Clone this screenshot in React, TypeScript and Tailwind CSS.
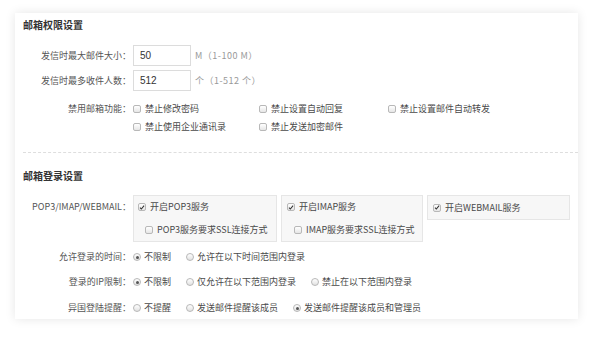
import React from 'react';

const font = { fontFamily: '"Noto Sans CJK SC", "Liberation Sans", sans-serif' };

const Check = ({ checked = false }: { checked?: boolean }) => (
  <span className="relative inline-flex h-[8px] w-[8px] shrink-0 items-center justify-center rounded-[2px] border border-[#b8b8b8] bg-gradient-to-b from-white to-[#e6e6e6]">
    {checked && (
      <svg viewBox="0 0 8 8" className="h-[7px] w-[7px]">
        <path d="M1.3 4.2 L3.1 6 L6.8 1.6" fill="none" stroke="#333" strokeWidth="1.4" />
      </svg>
    )}
  </span>
);

const Radio = ({ checked = false }: { checked?: boolean }) => (
  <span className="inline-flex h-[8px] w-[8px] shrink-0 items-center justify-center rounded-full border border-[#b8b8b8] bg-gradient-to-b from-white to-[#e2e2e2]">
    {checked && <span className="h-[3px] w-[3px] rounded-full bg-[#555]" />}
  </span>
);

const Label = ({ children }: { children: React.ReactNode }) => (
  <div className="w-[116px] shrink-0 text-right text-[#555]">{children}</div>
);

const CheckItem = ({ text, checked, w }: { text: string; checked?: boolean; w?: string }) => (
  <label className={`flex items-center gap-[4px] ${w ?? ''}`}>
    <Check checked={checked} />
    <span>{text}</span>
  </label>
);

const RadioItem = ({ text, checked }: { text: string; checked?: boolean }) => (
  <label className="mr-[15px] flex items-center gap-[3px]">
    <Radio checked={checked} />
    <span>{text}</span>
  </label>
);

export default function App() {
  return (
    <div className="h-[338px] w-[601px] bg-white pl-[15px] pt-[13px]" style={font}>
      <div className="flex h-[306px] w-[563px] flex-col bg-white text-[9px] leading-[12px] text-[#4a4a4a] shadow-[0_0_10px_rgba(0,0,0,0.1)]">
        {/* 邮箱权限设置 */}
        <div className="flex h-[24px] items-center pl-[8px] text-[10px] font-bold text-[#333]">邮箱权限设置</div>

        <div className="mt-[8px] flex h-[21px] items-center">
          <Label>发信时最大邮件大小：</Label>
          <div className="ml-[2px] flex h-[21px] w-[58px] items-center border border-[#dcdcdc] pl-[6px] text-[10px] text-[#333]" style={{ fontFamily: '"Liberation Sans", sans-serif' }}>50</div>
          <span className="ml-[4px] tracking-[0.5px] text-[#999]">M（1-100 M）</span>
        </div>

        <div className="mt-[4px] flex h-[21px] items-center">
          <Label>发信时最多收件人数：</Label>
          <div className="ml-[2px] flex h-[21px] w-[58px] items-center border border-[#dcdcdc] pl-[6px] text-[10px] text-[#333]" style={{ fontFamily: '"Liberation Sans", sans-serif' }}>512</div>
          <span className="ml-[4px] tracking-[0.5px] text-[#999]">个（1-512 个）</span>
        </div>

        <div className="mt-[8px] flex h-[19px] items-center">
          <Label>禁用邮箱功能：</Label>
          <div className="ml-[2px] flex items-center">
            <CheckItem text="禁止修改密码" w="w-[126px]" />
            <CheckItem text="禁止设置自动回复" w="w-[129px]" />
            <CheckItem text="禁止设置邮件自动转发" />
          </div>
        </div>
        <div className="flex h-[18px] items-center pl-[118px]">
          <CheckItem text="禁止使用企业通讯录" w="w-[126px]" />
          <CheckItem text="禁止发送加密邮件" />
        </div>

        <div className="ml-[8px] mt-[16px] border-t border-dashed border-[#dedede]" />

        {/* 邮箱登录设置 */}
        <div className="mt-[11px] flex h-[24px] items-center pl-[8px] text-[10px] font-bold text-[#333]">邮箱登录设置</div>

        <div className="mt-[7px] flex items-start">
          <div className="flex h-[23px] items-center">
            <Label>POP3/IMAP/WEBMAIL：</Label>
          </div>
          <div className="ml-[2px] flex items-start gap-[4px]">
            <div className="flex h-[47px] w-[144px] flex-col border border-[#e6e6e6] bg-[#f7f7f7] pl-[4px]">
              <div className="flex h-[22px] items-center"><CheckItem text="开启POP3服务" checked /></div>
              <div className="flex h-[23px] items-center pl-[7px]"><CheckItem text="POP3服务要求SSL连接方式" /></div>
            </div>
            <div className="flex h-[47px] w-[142px] flex-col border border-[#e6e6e6] bg-[#f7f7f7] pl-[5px]">
              <div className="flex h-[22px] items-center"><CheckItem text="开启IMAP服务" checked /></div>
              <div className="flex h-[23px] items-center pl-[7px]"><CheckItem text="IMAP服务要求SSL连接方式" /></div>
            </div>
            <div className="flex h-[25px] w-[143px] items-center border border-[#e6e6e6] bg-[#f7f7f7] pl-[5px]">
              <CheckItem text="开启WEBMAIL服务" checked />
            </div>
          </div>
        </div>

        <div className="mt-[6px] flex h-[18px] items-center">
          <Label>允许登录的时间：</Label>
          <div className="ml-[2px] flex items-center">
            <RadioItem text="不限制" checked />
            <RadioItem text="允许在以下时间范围内登录" />
          </div>
        </div>
        <div className="mt-[7px] flex h-[18px] items-center">
          <Label>登录的IP限制：</Label>
          <div className="ml-[2px] flex items-center">
            <RadioItem text="不限制" checked />
            <RadioItem text="仅允许在以下范围内登录" />
            <RadioItem text="禁止在以下范围内登录" />
          </div>
        </div>
        <div className="mt-[8px] flex h-[18px] items-center">
          <Label>异国登陆提醒：</Label>
          <div className="ml-[2px] flex items-center">
            <RadioItem text="不提醒" />
            <RadioItem text="发送邮件提醒该成员" />
            <RadioItem text="发送邮件提醒该成员和管理员" checked />
          </div>
        </div>
      </div>
    </div>
  );
}
